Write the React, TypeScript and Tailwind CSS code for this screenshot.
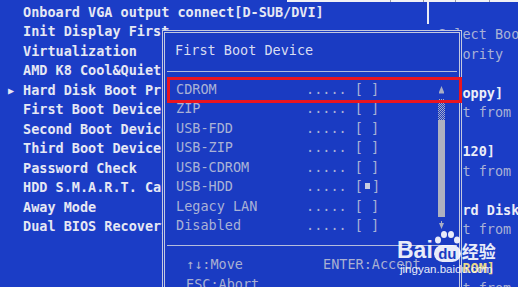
const mono = "font-['DejaVu_Sans_Mono','Liberation_Mono',monospace]";

const mainRows: { text: string; arrow?: boolean }[] = [
  { text: "Onboard VGA output connect[D-SUB/DVI]" },
  { text: "Init Display First" },
  { text: "Virtualization" },
  { text: "AMD K8 Cool&Quiet control" },
  { text: "Hard Disk Boot Priority", arrow: true },
  { text: "First Boot Device" },
  { text: "Second Boot Device" },
  { text: "Third Boot Device" },
  { text: "Password Check" },
  { text: "HDD S.M.A.R.T. Capability" },
  { text: "Away Mode" },
  { text: "Dual BIOS Recovery Source" },
];

const helpRows: { text: string; bright?: boolean; yellow?: boolean }[] = [
  { text: "" },
  { text: "Select Boot Device" },
  { text: "Priority" },
  { text: "" },
  { text: "[Floppy]", bright: true },
  { text: "Boot from floppy" },
  { text: "" },
  { text: "[LS120]", bright: true },
  { text: "Boot from LS120" },
  { text: "" },
  { text: "[Hard Disk]", bright: true },
  { text: "Boot from HDD" },
  { text: "" },
  { text: "[CDROM]", yellow: true },
  { text: "Boot from CDROM" },
];

const bootItems = [
  { name: "CDROM", on: false },
  { name: "ZIP", on: false },
  { name: "USB-FDD", on: false },
  { name: "USB-ZIP", on: false },
  { name: "USB-CDROM", on: false },
  { name: "USB-HDD", on: true },
  { name: "Legacy LAN", on: false },
  { name: "Disabled", on: false },
];

function Row({ children, className = "" }: { children?: React.ReactNode; className?: string }) {
  return <div className={`flex h-[19.5px] items-center whitespace-pre ${className}`}>{children}</div>;
}

function Scrollbar() {
  return (
    <div className="flex w-[8px] flex-col items-center pt-[6px]">
      <svg width="7" height="9" viewBox="0 0 7 9">
        <path d="M3.5 1 L6 7 L1 7 Z" fill="#a9aec4" />
        <rect x="1" y="7" width="5" height="1.5" fill="#a9aec4" />
      </svg>
      <div className="mt-[5px] h-[21px] w-[7px] bg-[repeating-conic-gradient(#a9aec4_0_25%,transparent_0_50%)] bg-[length:2px_2px]" />
      <div className="h-[97px] w-[7px] bg-[#aeb1c0]" />
      <svg className="mt-[4px]" width="7" height="8" viewBox="0 0 7 8">
        <rect x="3" y="0" width="1" height="2" fill="#a9aec4" />
        <path d="M1 2 L6 2 L3.5 8 Z" fill="#a9aec4" />
      </svg>
    </div>
  );
}

function Popup() {
  return (
    <div className="absolute left-[162px] top-[30px] h-[270px] w-[300px] border border-[#c3c8e0] bg-[#1a3bc2] p-px">
      <div className="h-full border border-[#c3c8e0] pt-[7px]">
        <Row className="pl-[10px] text-[#d9ddf2]">First Boot Device</Row>
        <div className="h-[19.5px] pt-[11px]">
          <div className="mx-[2px] h-px bg-[#b4bcdc]" />
        </div>
        <div className="flex">
          <div className="w-[272px] pl-[11px] text-[#a9b2d6]">
            {bootItems.map((b) => (
              <Row key={b.name}>
                {b.name.padEnd(16, " ") + "..... "}
                <span>[</span>
                {b.on ? <span className="mx-[2px] inline-block h-[6px] w-[5px] bg-[#c8cce0]" /> : <span> </span>}
                <span>]</span>
              </Row>
            ))}
          </div>
          <Scrollbar />
        </div>
        <div className="h-[19.5px] pt-[10px]">
          <div className="mx-[2px] h-px bg-[#b4bcdc]" />
        </div>
        <Row className="pl-[21px] text-[#a9b0d2]">
          <span className="w-[137px]">↑↓:Move</span>
          <span>ENTER:Accept</span>
        </Row>
        <Row className="pl-[21px] text-[#a9b0d2]">ESC:Abort</Row>
      </div>
    </div>
  );
}

function Watermark() {
  return (
    <div className="absolute left-[397px] top-[231px] text-white opacity-90">
      <div className="flex items-end">
        <span className="font-['Liberation_Sans',Arial,sans-serif] text-[23px] font-bold leading-[24px]">Bai</span>
        <div className="relative ml-[1px] h-[31px] w-[27px]">
          <svg className="absolute left-0 top-0" width="27" height="14" viewBox="0 0 27 14">
            <ellipse cx="4" cy="9" rx="3" ry="3.5" fill="white" />
            <ellipse cx="10" cy="3.5" rx="3" ry="3.5" fill="white" />
            <ellipse cx="17" cy="3.5" rx="3" ry="3.5" fill="white" />
            <ellipse cx="23" cy="9" rx="3" ry="3.5" fill="white" />
          </svg>
          <div className="absolute bottom-0 left-0 flex h-[17px] w-[27px] items-center justify-center rounded-[9px] bg-white font-['Liberation_Sans',Arial,sans-serif] text-[15px] font-bold leading-none text-[#1a3bc2]">
            du
          </div>
        </div>
        <span className="ml-[1px] font-['Noto_Sans_CJK_SC',sans-serif] text-[17px] font-bold leading-[22px]">经验</span>
      </div>
      <div className="mt-[1px] pl-[3px] font-['Liberation_Sans',Arial,sans-serif] text-[11.5px] leading-[12px]">
        jingyan.baidu.com
      </div>
    </div>
  );
}

export default function App() {
  return (
    <div className={`relative h-[287px] w-[518px] overflow-hidden bg-[#1b3dc6] text-[13.5px] ${mono}`}>
      <div className="absolute left-[287px] right-0 top-0 flex h-[2px] bg-[#f2f2f4]">
        <div className="ml-[103px] h-full w-px bg-[#9a9aa4]" />
        <div className="ml-[32px] h-full w-px bg-[#9a9aa4]" />
        <div className="ml-[31px] h-full w-px bg-[#9a9aa4]" />
        <div className="ml-[33px] h-full w-px bg-[#9a9aa4]" />
      </div>

      <div className="flex pt-[2.25px]">
        <div className="w-[427px] shrink-0 pl-[1px] font-bold text-[#e6e8f4]">
          {mainRows.map((r) => (
            <Row key={r.text}>
              <span className="w-[22px] pl-[7px] text-[10px]">{r.arrow ? "▶" : ""}</span>
              {r.text}
            </Row>
          ))}
        </div>
        <div className="mt-[-2px] h-[24px] w-[2px] shrink-0 bg-[#e8eaf4]" />
        <div className="shrink-0 pl-[9px] pt-[3px]">
          {helpRows.map((r, i) => (
            <Row
              key={i}
              className={
                r.bright ? "font-bold text-[#eceef8]" : r.yellow ? "font-bold text-[#e8d88a]" : "text-[#a9b2d6]"
              }
            >
              {r.text}
            </Row>
          ))}
        </div>
      </div>

      <Popup />

      <div className="absolute left-[167px] top-[77px] h-[26px] w-[295px] border-[3px] border-[#ea1520]" />

      <Watermark />
    </div>
  );
}
